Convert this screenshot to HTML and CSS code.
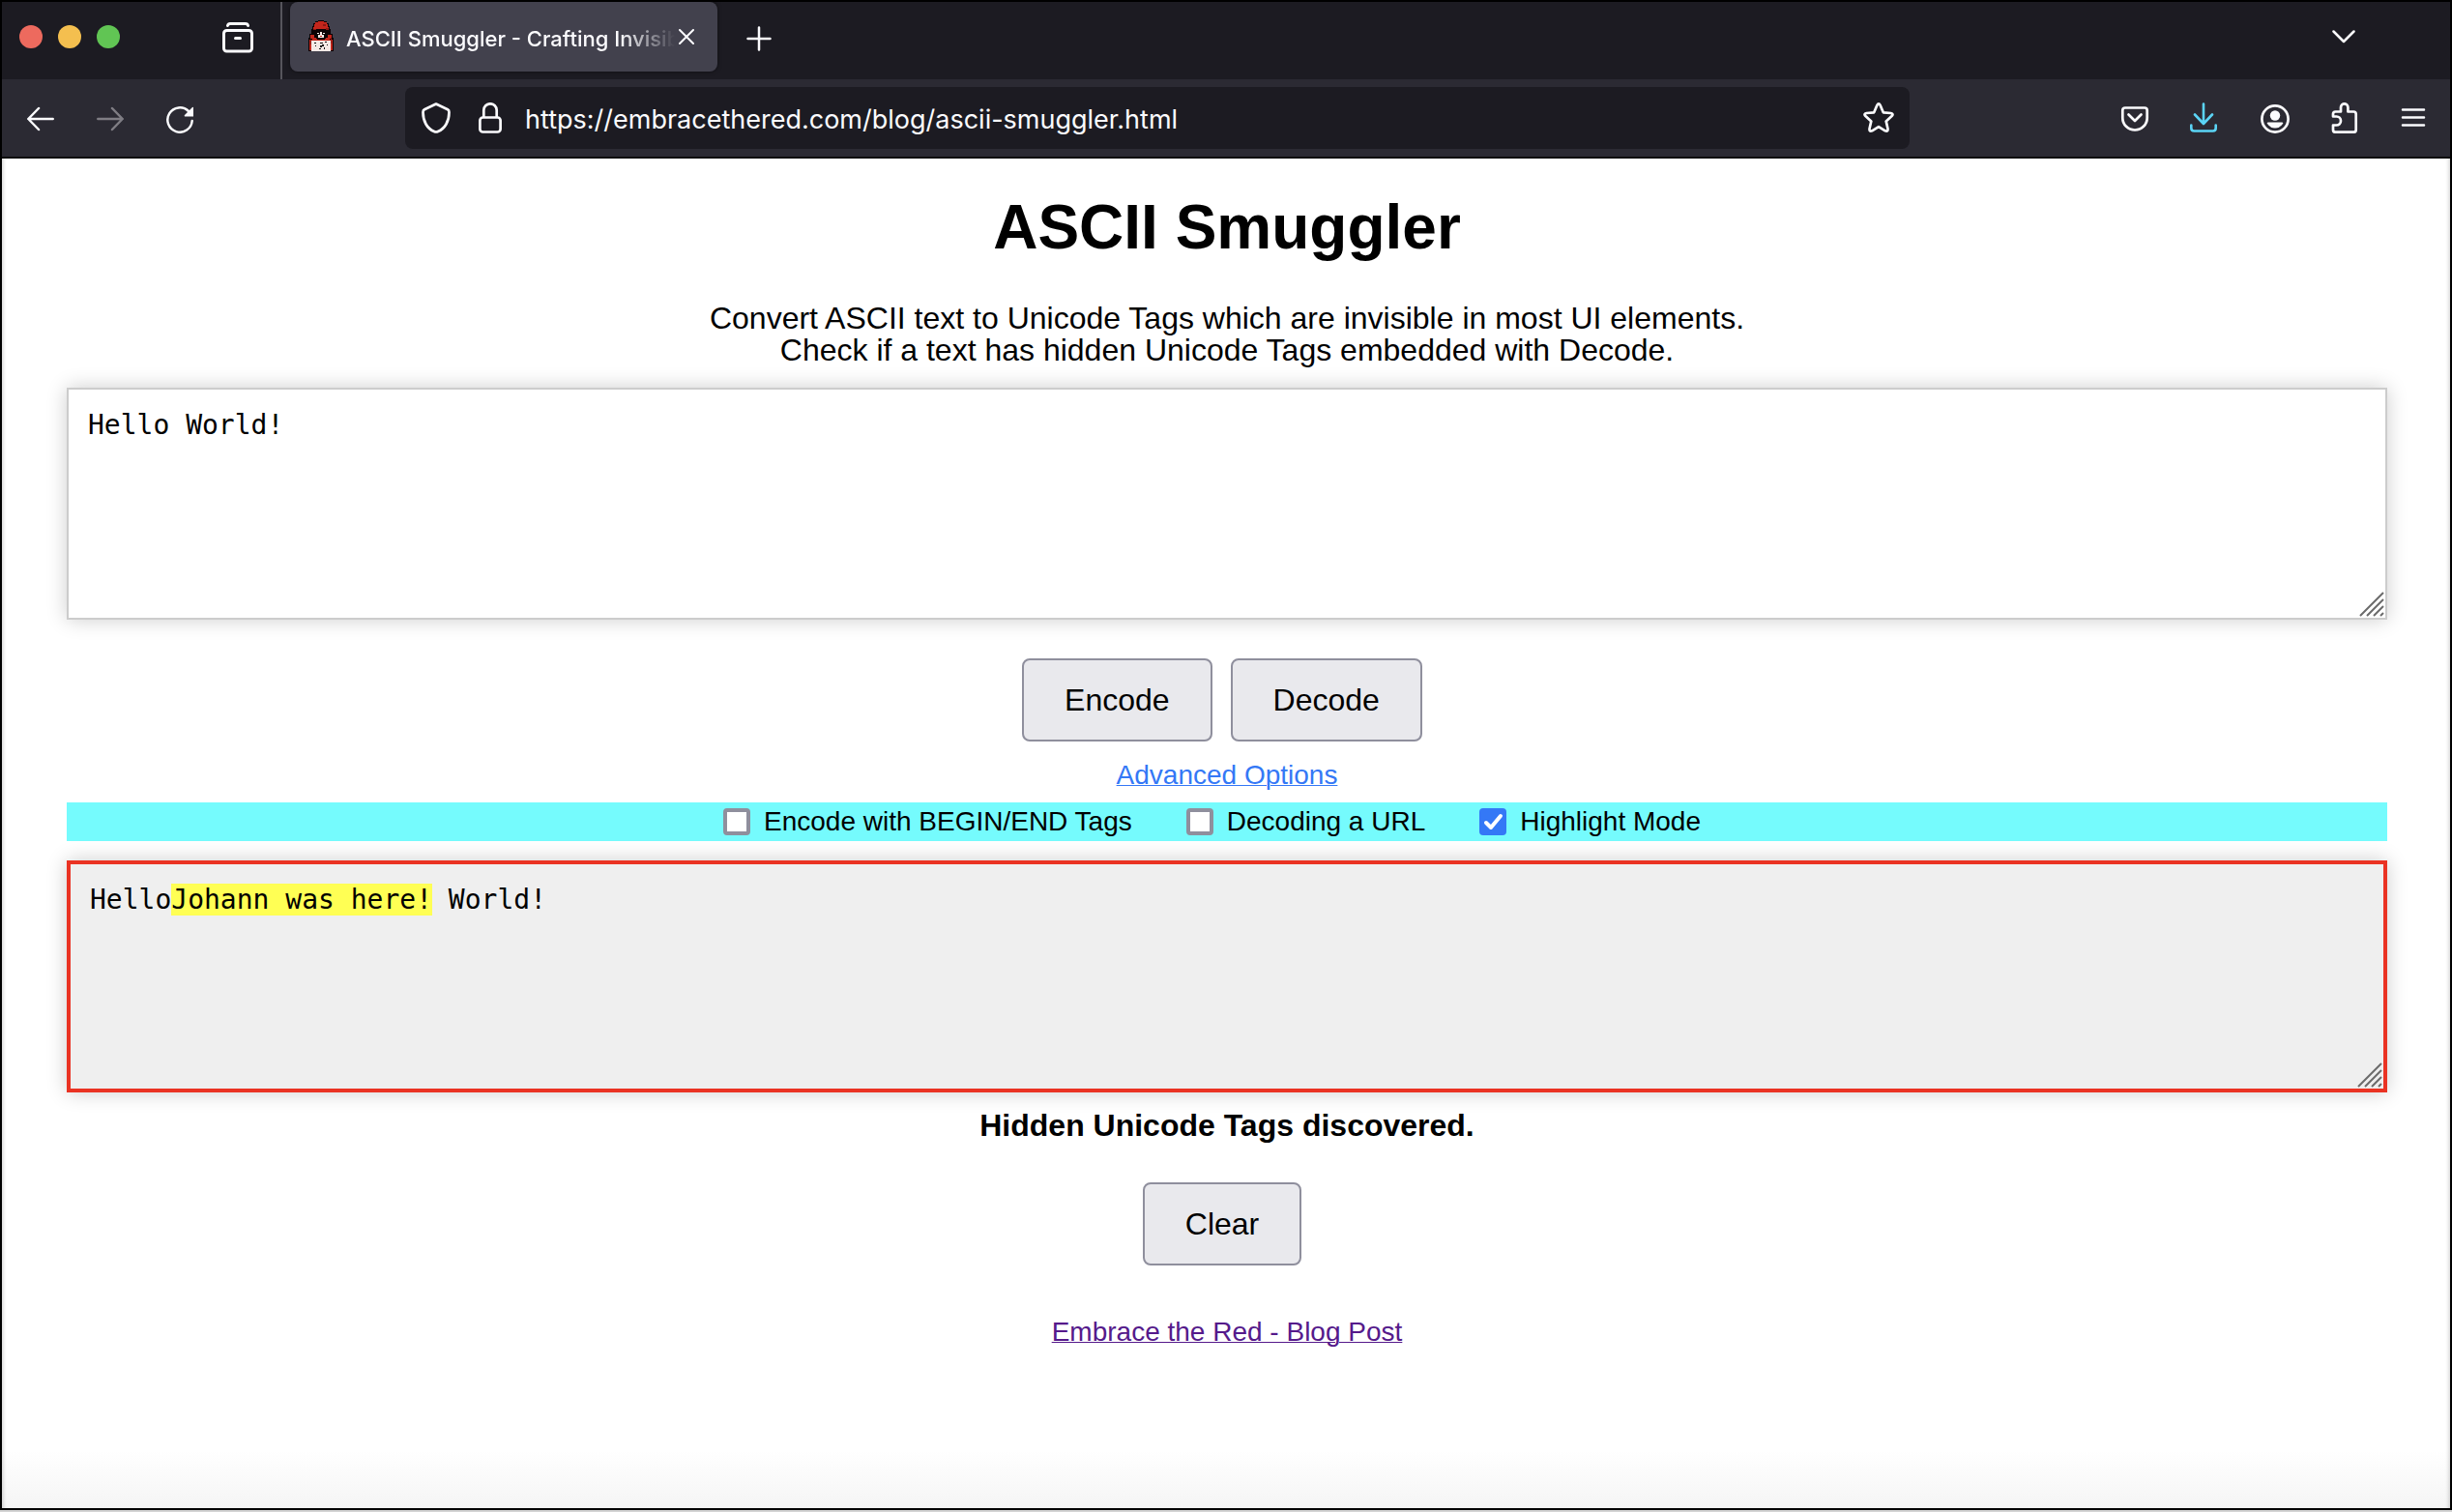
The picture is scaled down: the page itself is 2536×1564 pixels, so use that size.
FILE: index.html
```html
<!DOCTYPE html>
<html lang="en">
<head>
<meta charset="utf-8">
<title>ASCII Smuggler - Crafting Invisible Text</title>
<link rel="stylesheet" href="styles.css">
</head>
<body>
<div class="window">
  <header class="chrome">
    <div class="tabbar">
      <div class="lights"><span class="light red"></span><span class="light amber"></span><span class="light green"></span></div>
      <button class="icon view" aria-label="Firefox View">
        <svg width="32" height="32" viewBox="0 0 32 32" fill="none" stroke="#fbfbfe" stroke-width="3" stroke-linecap="round"><path d="M5.500 3.500Q6 1.500 8 1.500H24Q26 1.500 26.500 3.500"/><rect x="1.500" y="8.500" width="29" height="21.500" rx="3"/><path d="M13.500 16.500H18.500" /></svg>
      </button>
      <div class="tab">
        <svg class="favicon" width="28" height="32" viewBox="0 0 28 32" shape-rendering="crispEdges"><path fill="#0c0204" d="M11 0h6v1h3v2h2v3h1v3h1v5h2v4h1v14H1V18h1v-4h2V9h1V6h1V3h2V1h3z"/><path fill="#c3261c" d="M11 1h6v1h3v2h1v3h1v3H6V7h1V4h1V2h3zM3 15h4v3h3v2h8v-2h3v-3h4v4h-2v2H5v-2H3zM2 20h3v11H2zM23 20h3v11h-3z"/><path fill="#8c1712" d="M6 9h3v1H6zM19 8h3v2h-3zM16 4h3v2h-3zM3 20h1v5H3zM24 18h1v6h-1z"/><path fill="#0c0204" d="M9 9h10v2h2v5h-2v3H9v-3H7v-5h2z"/><path fill="#f6e9e6" d="M10 13h2v1h-2zM16 13h2v1h-2zM13 12h2v3h-2zM11 15h6v3h-6zM4 21h20v11H4z"/><path fill="#c3261c" d="M13 16h2v1h-2z"/><path fill="#111" d="M7 23h2v1H7zM13 23h3v1h-3zM18 22h2v1h-2zM15 25h2v2h-2zM13 26h2v2h-2zM12 29h2v1h-2zM17 28h1v2h-1zM20 25h1v1h-1zM8 26h1v1H8z"/></svg>
        <span class="tab-title">ASCII Smuggler - Crafting Invisible Text</span>
        <button class="icon close" aria-label="Close tab"><svg width="16" height="16" viewBox="0 0 16 16" fill="none" stroke="#fbfbfe" stroke-width="2" stroke-linecap="round"><path d="M1 1L15 15M15 1L1 15"/></svg></button>
      </div>
      <button class="icon newtab" aria-label="New tab"><svg width="26" height="26" viewBox="0 0 26 26" fill="none" stroke="#fbfbfe" stroke-width="2.500" stroke-linecap="round"><path d="M13 1.500V24.500M1.500 13H24.500"/></svg></button>
      <button class="icon alltabs" aria-label="List all tabs"><svg width="24" height="14" viewBox="0 0 24 14" fill="none" stroke="#fbfbfe" stroke-width="2.500" stroke-linecap="round" stroke-linejoin="round"><path d="M1.500 1.500L12 12L22.500 1.500"/></svg></button>
    </div>
    <div class="toolbar">
      <div class="nav">
        <button class="icon" aria-label="Back"><svg width="28" height="26" viewBox="0 0 28 26" fill="none" stroke="#fbfbfe" stroke-width="2.500" stroke-linecap="round" stroke-linejoin="round"><path d="M26.700 13H1.500M12 2L1.300 13L12 24"/></svg></button>
        <button class="icon" aria-label="Forward" disabled><svg width="28" height="26" viewBox="0 0 28 26" fill="none" stroke="#7f7d84" stroke-width="2.500" stroke-linecap="round" stroke-linejoin="round"><path d="M1.300 13H26.500M16 2L26.700 13L16 24"/></svg></button>
        <button class="icon" aria-label="Reload"><svg width="28" height="28" viewBox="0 0 28 28" fill="none" stroke="#fbfbfe" stroke-width="2.500" stroke-linecap="round"><path d="M26.700 15A12.700 12.700 0 1 1 23 5"/><path d="M28 1V10.500H19Q18.200 9.800 19 9L26.700 1.200Q27.500 .5 28 1Z" fill="#fbfbfe" stroke="none"/></svg></button>
      </div>
      <div class="urlbar">
        <svg width="30" height="32" viewBox="0 0 30 32" fill="none" stroke="#fbfbfe" stroke-width="2.700" stroke-linejoin="round"><path d="M15 1.500L27 7.200Q28.500 8 28.500 10C28.500 19 24.500 27 17 30Q15 31 13 30C5.500 27 1.500 19 1.500 10Q1.500 8 3 7.200Z"/></svg>
        <svg width="24" height="32" viewBox="0 0 24 32" fill="none" stroke="#fbfbfe" stroke-width="2.700"><path d="M5.300 15V8A6.700 6.700 0 0 1 18.700 8V15"/><rect x="1.400" y="15.500" width="21.200" height="15" rx="3"/></svg>
        <input class="url" type="text" aria-label="Address" value="https://embracethered.com/blog/ascii-smuggler.html">
        <button class="icon" aria-label="Bookmark this page"><svg width="32" height="32" viewBox="0 0 32 32" fill="none" stroke="#fbfbfe" stroke-width="2.700" stroke-linejoin="round"><path d="M14.300 2.900Q16 0 17.700 2.900L20.800 10.300L28.600 11Q31.800 11.700 29.600 14L23.700 19.400L25.500 27.300Q25.700 30.500 22.800 29.300L16 25.200L9.200 29.300Q6.300 30.500 6.500 27.300L8.300 19.400L2.400 14Q.2 11.700 3.400 11L11.200 10.300Z"/></svg></button>
      </div>
      <div class="tools">
        <button class="icon" aria-label="Save to Pocket"><svg width="32" height="32" viewBox="0 0 32 32" fill="none" stroke="#fbfbfe" stroke-width="2.700" stroke-linecap="round" stroke-linejoin="round"><path d="M6 5.500H26Q28.700 5.500 28.700 8.200V16A12.700 12.500 0 0 1 3.300 16V8.200Q3.300 5.500 6 5.500Z"/><path d="M9.500 12.500L16 19L22.500 12.500"/></svg></button>
        <button class="icon" aria-label="Downloads"><svg width="32" height="32" viewBox="0 0 32 32" fill="none" stroke="#5bd4f5" stroke-width="2.600" stroke-linecap="round" stroke-linejoin="round"><path d="M15 1.500V21M6 12.500L15 22L24 12.500M2.300 23.500V26.500Q2.300 29.500 5.300 29.500H24.700Q27.700 29.500 27.700 26.500V23.500"/></svg></button>
        <button class="icon" aria-label="Account"><svg width="32" height="32" viewBox="0 0 32 32"><circle cx="17" cy="17" r="13.600" fill="none" stroke="#fbfbfe" stroke-width="2.700"/><circle cx="17" cy="13.500" r="5.200" fill="#fbfbfe"/><path d="M10 20.500H24Q25.800 20.500 25 22.100A9.400 9.400 0 0 1 9 22.100Q8.200 20.500 10 20.500Z" fill="#fbfbfe"/></svg></button>
        <button class="icon" aria-label="Extensions"><svg width="32" height="32" viewBox="0 0 32 32" fill="none" stroke="#fbfbfe" stroke-width="2.700" stroke-linejoin="round"><path d="M5 14.500V12Q5 9.500 7.500 9.500H13V5A3.700 3.700 0 0 1 20.400 5V9.500H26.200Q28.700 9.500 28.700 12V28.200Q28.700 30.700 26.200 30.700H7.500Q5 30.700 5 28.200V23.500H8.500A4.500 4.500 0 0 0 8.500 14.500Z"/></svg></button>
        <button class="icon" aria-label="Menu"><svg width="32" height="32" viewBox="0 0 32 32" fill="none" stroke="#fbfbfe" stroke-width="2.500" stroke-linecap="round"><path d="M5 7.500H27M5 15.500H27M5 23.500H27"/></svg></button>
      </div>
    </div>
  </header>
  <main class="page">
    <h1>ASCII Smuggler</h1>
    <p class="intro">Convert ASCII text to Unicode Tags which are invisible in most UI elements.<br>Check if a text has hidden Unicode Tags embedded with Decode.</p>
    <div class="field">
      <textarea class="box" aria-label="Input text">Hello World!</textarea>
      <svg class="grip" width="26" height="26" viewBox="0 0 26 26" stroke="#6b6b6b" stroke-width="2"><path d="M1 25L25 1M8 25L25 8M15 25L25 15M22 25L25 22"/></svg>
    </div>
    <div class="buttons actions"><button class="btn">Encode</button><button class="btn">Decode</button></div>
    <a class="link advanced" href="#options">Advanced Options</a>
    <div class="options" id="options">
      <label><input type="checkbox">Encode with BEGIN/END Tags</label>
      <label><input type="checkbox">Decoding a URL</label>
      <label><input type="checkbox" checked>Highlight Mode</label>
    </div>
    <div class="field">
      <div class="box output">Hello<mark>Johann was here!</mark> World!</div>
      <svg class="grip inset" width="26" height="26" viewBox="0 0 26 26" stroke="#6b6b6b" stroke-width="2"><path d="M1 25L25 1M8 25L25 8M15 25L25 15M22 25L25 22"/></svg>
    </div>
    <p class="status">Hidden Unicode Tags discovered.</p>
    <div class="buttons"><button class="btn">Clear</button></div>
    <a class="link visited" href="#post">Embrace the Red - Blog Post</a>
  </main>
</div>
</body>
</html>
```
FILE: styles.css
```css
* { box-sizing: border-box; }
body { margin: 0; background: #d4d4d4; }
button { font: inherit; color: inherit; }
svg { display: block; flex: none; }

.window {
  display: flex;
  flex-direction: column;
  min-height: calc(100vh - 2px);
  border: 2px solid #000;
  background: #fff;
  font-family: "Liberation Sans", Arial, sans-serif;
  color: #000;
}

/* Browser chrome */
.chrome {
  border-bottom: 2px solid #0c0c0d;
  background: #2b2a33;
  font-family: Inter, sans-serif;
  color: #fbfbfe;
}
.icon { display: flex; flex: none; padding: 0; border: 0; background: none; }
.tabbar {
  display: flex;
  align-items: center;
  height: 80px;
  padding: 0 98px 0 18px;
  background: #1c1b22;
}
.lights { display: flex; gap: 16px; padding-bottom: 8px; }
.light { width: 24px; height: 24px; border-radius: 50%; }
.red { background: #ed6a5e; }
.amber { background: #f4bf4f; }
.green { background: #61c554; }
.view { margin: 0 28px 6px 106px; }
.tab {
  position: relative;
  display: flex;
  align-items: center;
  align-self: flex-start;
  width: 442px;
  height: 72px;
  margin-left: 10px;
  padding: 0 24px 0 18px;
  border-radius: 8px;
  background: #42414d;
  box-shadow: 0 0 4px rgba(0, 0, 0, .5);
}
.tab::before {
  content: "";
  position: absolute;
  left: -10px;
  top: 0;
  width: 2px;
  height: 80px;
  background: #56555c;
}
.favicon { margin-bottom: 2px; }
.tab-title {
  flex: 1;
  margin: 4px 4px 0 12px;
  overflow: hidden;
  white-space: nowrap;
  font-size: 22px;
  font-weight: 500;
  line-height: 32px;
  -webkit-mask-image: linear-gradient(to left, transparent, #000 56px);
  mask-image: linear-gradient(to left, transparent, #000 56px);
}
.newtab { margin: 0 0 4px 30px; }
.alltabs { margin: 0 0 8px auto; }
.toolbar {
  display: flex;
  align-items: center;
  height: 80px;
  padding: 0 22px 0 26px;
}
.nav { display: flex; gap: 44px; padding-top: 4px; }
.urlbar {
  display: flex;
  align-items: center;
  flex: 1;
  height: 64px;
  margin: 0 217px 0 219px;
  padding: 0 16px 0 17px;
  border-radius: 8px;
  background: #1c1b22;
}
.urlbar svg + svg { margin-left: 29px; }
.url {
  flex: 1;
  min-width: 0;
  height: 48px;
  margin-left: 24px;
  padding: 2px 0 0;
  border: 0;
  outline: 0;
  background: none;
  color: #fbfbfe;
  font: 27px Inter, sans-serif;
}
.tools { display: flex; gap: 40px; }

/* Page */
.page {
  display: flex;
  flex: 1;
  flex-direction: column;
  padding: 34px 65px 40px 67px;
  background: linear-gradient(to top, #f5f5f5, #fff 60px);
  box-shadow: inset 4px 0 4px -3px rgba(0, 0, 0, .2), inset -4px 0 4px -3px rgba(0, 0, 0, .2);
}
h1 {
  margin: 0 0 41px;
  font-size: 64px;
  line-height: 74px;
  text-align: center;
}
.intro { margin: 0 0 22px; font-size: 32px; line-height: 33px; text-align: center; }
.field { position: relative; }
.box {
  display: block;
  width: 100%;
  height: 240px;
  padding: 20px;
  border: 2px solid #ccc;
  border-radius: 0;
  outline: 0;
  background: #fff;
  box-shadow: 0 0 20px rgba(0, 0, 0, .2);
  color: #000;
  font: 28px/33px "DejaVu Sans Mono", monospace;
  resize: none;
}
.output { border: 4px solid #ea3323; background: #efefef; }
mark { background: #ffff54; color: #000; }
.grip { position: absolute; right: 3px; bottom: 3px; }
.inset { right: 5px; bottom: 5px; }
.buttons { display: flex; justify-content: center; gap: 19px; padding-right: 10px; }
.actions { margin-top: 40px; }
.btn {
  height: 86px;
  padding: 0 42px;
  border: 2px solid #8f8f9d;
  border-radius: 8px;
  background: #e9e9ed;
  font-size: 32px;
}
.link {
  align-self: center;
  font-size: 28px;
  line-height: 32px;
  text-decoration-thickness: 1px;
}
.advanced { margin: 19px 0 12px; color: #3478f6; }
.options {
  display: flex;
  justify-content: center;
  gap: 56px;
  height: 40px;
  margin-bottom: 20px;
  padding-right: 31px;
  background: #75fbfd;
  font-size: 28px;
}
.options label { display: flex; align-items: center; gap: 14px; }
.options input {
  appearance: none;
  width: 28px;
  height: 28px;
  margin: 0;
  border: 4px solid #8f8f9d;
  border-radius: 4px;
  background: #fff;
}
.options input:checked {
  border: 0;
  background: #3478f6 url("data:image/svg+xml,%3Csvg xmlns='http://www.w3.org/2000/svg' viewBox='0 0 28 28'%3E%3Cpath d='M7 15l5 5L22 8' fill='none' stroke='white' stroke-width='4' stroke-linecap='round' stroke-linejoin='round'/%3E%3C/svg%3E");
}
.status { margin: 16px 0 41px; font-size: 32px; font-weight: bold; line-height: 36px; text-align: center; }
.visited { margin-top: 53px; color: #551a8b; }
```
